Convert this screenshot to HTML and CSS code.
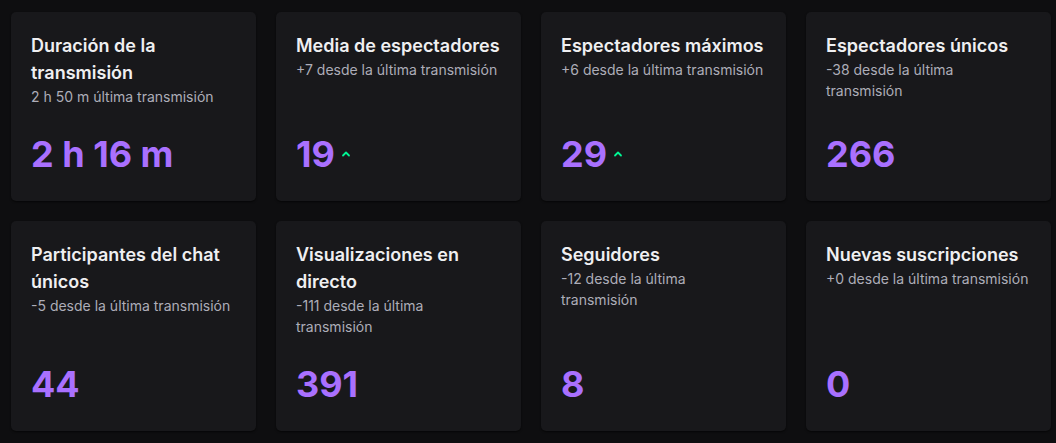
FILE: index.html
```html
<!DOCTYPE html>
<html lang="es">

<head>
    <meta charset="UTF-8">
    <meta name="viewport" content="width=1056, height=443">
    <title>Resumen de la transmisión</title>
    <link rel="stylesheet" href="styles.css">
</head>

<body>
    <div class="stats-grid">
        <div class="stat-card">
            <h3 class="stat-title">Duración de la transmisión</h3>
            <p class="stat-delta">2 h 50 m última transmisión</p>
            <div class="stat-value">2 h 16 m</div>
        </div>

        <div class="stat-card">
            <h3 class="stat-title">Media de espectadores</h3>
            <p class="stat-delta">+7 desde la última transmisión</p>
            <div class="stat-value">19
                <svg class="trend-up" viewBox="0 0 10 10" xmlns="http://www.w3.org/2000/svg">
                    <path d="M2 6.5 5 3.5 8 6.5" />
                </svg>
            </div>
        </div>

        <div class="stat-card">
            <h3 class="stat-title">Espectadores máximos</h3>
            <p class="stat-delta">+6 desde la última transmisión</p>
            <div class="stat-value">29
                <svg class="trend-up" viewBox="0 0 10 10" xmlns="http://www.w3.org/2000/svg">
                    <path d="M2 6.5 5 3.5 8 6.5" />
                </svg>
            </div>
        </div>

        <div class="stat-card">
            <h3 class="stat-title">Espectadores únicos</h3>
            <p class="stat-delta">-38 desde la última transmisión</p>
            <div class="stat-value">266</div>
        </div>

        <div class="stat-card">
            <h3 class="stat-title">Participantes del chat únicos</h3>
            <p class="stat-delta">-5 desde la última transmisión</p>
            <div class="stat-value">44</div>
        </div>

        <div class="stat-card">
            <h3 class="stat-title">Visualizaciones en directo</h3>
            <p class="stat-delta">-111 desde la última transmisión</p>
            <div class="stat-value">391</div>
        </div>

        <div class="stat-card">
            <h3 class="stat-title">Seguidores</h3>
            <p class="stat-delta">-12 desde la última transmisión</p>
            <div class="stat-value">8</div>
        </div>

        <div class="stat-card">
            <h3 class="stat-title">Nuevas suscripciones</h3>
            <p class="stat-delta">+0 desde la última transmisión</p>
            <div class="stat-value">0</div>
        </div>
    </div>
</body>

</html>
```

FILE: styles.css
```css
html,
body {
    margin: 0;
    padding: 0;
    background: #0e0e10;
    font-family: Inter, 'Noto Sans', sans-serif;
    color: #efeff1;
}

.stats-grid {
    display: grid;
    grid-template-columns: repeat(4, 245px);
    gap: 20px;
    padding: 12px 5px 12px 11px;
}

.stat-card {
    display: flex;
    flex-direction: column;
    padding: 20px;
    background: #18181b;
    border-radius: 5px;
    box-shadow: 0 1px 2px rgba(0, 0, 0, 0.6);
}

.stat-title {
    margin: 0;
    font-size: 18px;
    font-weight: 600;
    line-height: 27px;
    color: #efeff1;
}

.stat-delta {
    margin: 0 1.5px 0 0;
    font-size: 14px;
    line-height: 21px;
    color: #adadb8;
}

.stat-value {
    display: flex;
    align-items: center;
    margin-top: auto;
    padding-top: 20px;
    font-size: 36px;
    font-weight: 700;
    line-height: 54px;
    color: #a970ff;
}

.trend-up {
    width: 10px;
    height: 10px;
    margin-left: 6px;
    fill: none;
    stroke: #00f593;
    stroke-width: 1.8;
    stroke-linecap: round;
    stroke-linejoin: round;
}
```
